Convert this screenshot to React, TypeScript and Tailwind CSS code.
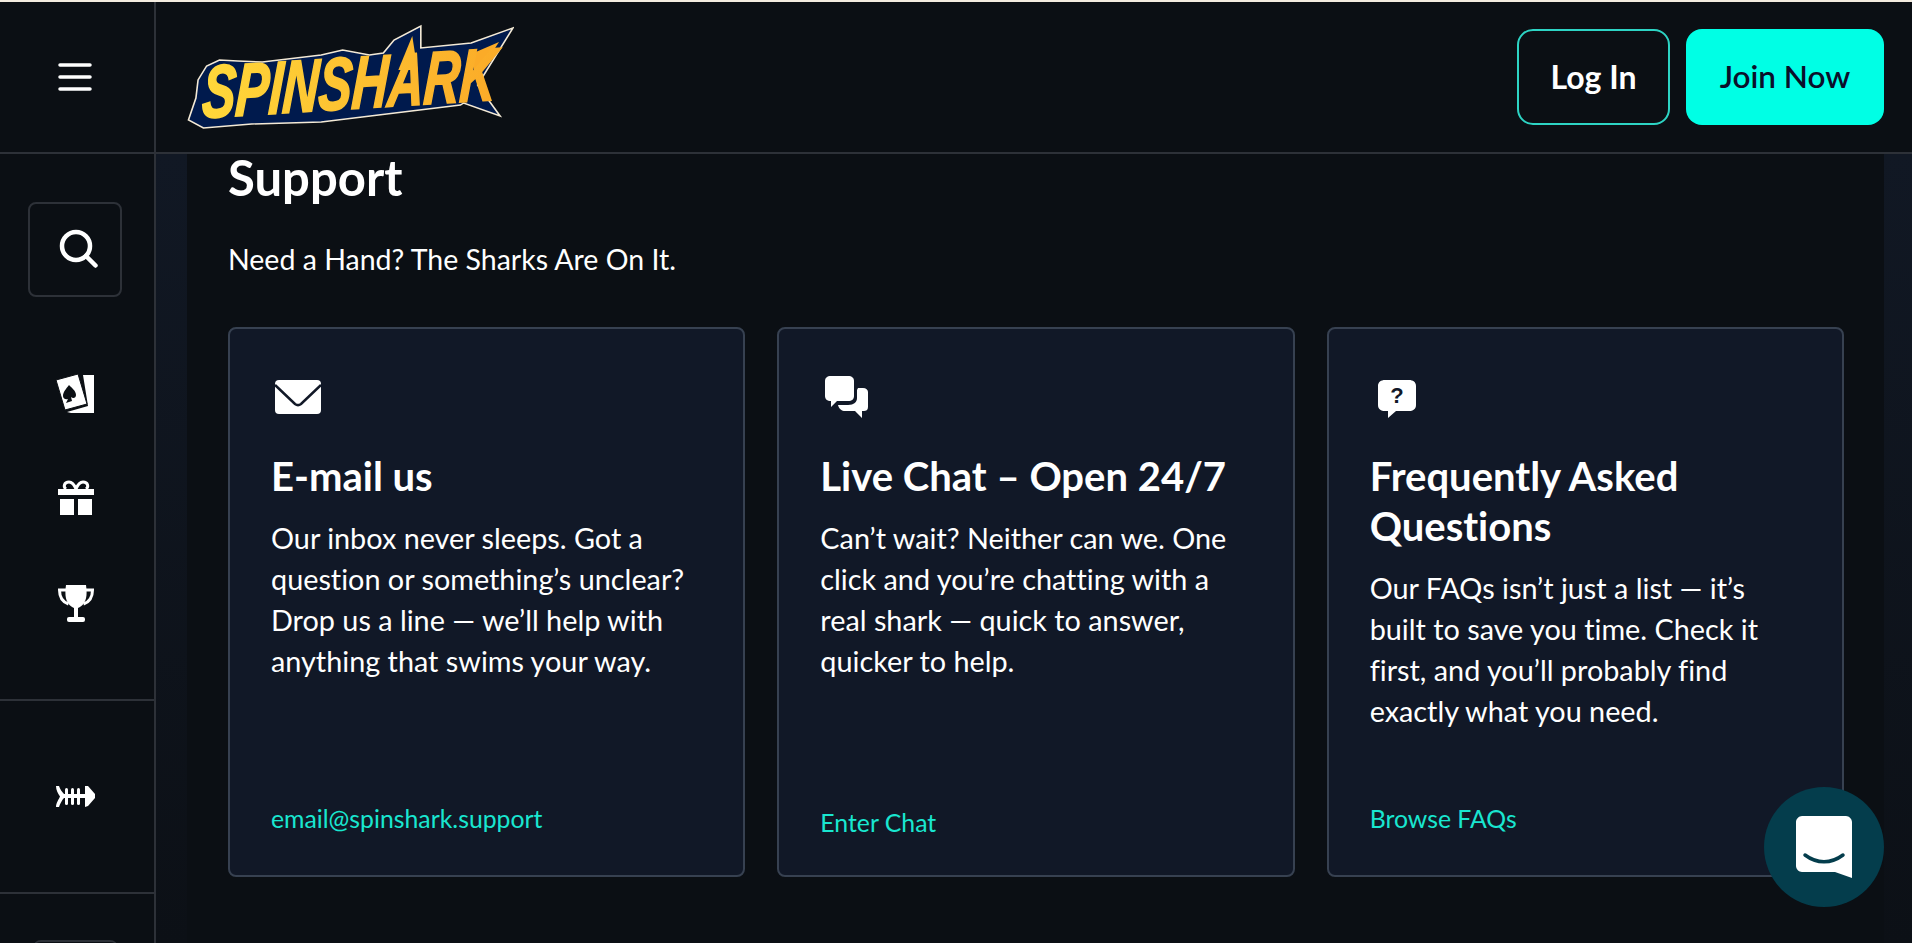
const font = { fontFamily: '"Lato", "Liberation Sans", sans-serif' };

function Logo() {
  return (
    <svg width="332" height="110" viewBox="170 22 310 110" preserveAspectRatio="none" className="shrink-0">
      <defs>
        <linearGradient id="gold" x1="0" y1="0" x2="1" y2="0">
          <stop offset="0" stopColor="#ffd83a" />
          <stop offset="1" stopColor="#fbab28" />
        </linearGradient>
      </defs>
      <polygon
        points="176,120 183,98 185,80 193,66 205,60 222,61 245,62 300,55 320,50 345,55 358,53 368,40 393,26 393,48 440,43 479,28 446,85 467,116 433,103 430,105 300,122 235,124 190,128"
        fill="#001a4d"
        stroke="#f4ead6"
        strokeWidth="1.500"
      />
      <polygon points="372,70 385,36 390,70" fill="#fdb92e" />
      <polygon points="440,54 466,42 444,78" fill="#fbab28" />
      <text
        transform="translate(188 118) rotate(-3.800) skewX(-7) scale(0.63 1)"
        fontFamily="Liberation Sans"
        fontWeight="700"
        fontStyle="italic"
        fontSize="74"
        fill="url(#gold)"
        stroke="url(#gold)"
        strokeWidth="2"
      >
        SPINSHARK
      </text>
    </svg>
  );
}

function CardsIcon() {
  return (
    <svg width="40" height="40" viewBox="0 0 40 40">
      <path d="M28 1h11v38H16l-4-1 21-6z" fill="#fff" />
      <path d="M1 6L23 0l9 30-22 6z" fill="#fff" stroke="#0b0f14" strokeWidth="1" />
      <path
        d="M14 11c3 3 7 6 7 10 0 3-3 4-5 2l1 4-6 2 2-4c-3 1-5-1-5-3 0-4 3-7 6-11z"
        fill="#0b0f14"
      />
    </svg>
  );
}

function GiftIcon() {
  return (
    <svg width="36" height="35" viewBox="0 0 36 35" fill="#fff">
      <rect x="0" y="9" width="36" height="6" />
      <rect x="2" y="19" width="14" height="16" />
      <rect x="20" y="19" width="14" height="16" />
      <path
        d="M18 9c-2-5-4-7-7-7-5 0-6 5-3 7M18 9c2-5 4-7 7-7 5 0 6 5 3 7"
        fill="none"
        stroke="#fff"
        strokeWidth="3"
      />
    </svg>
  );
}

function TrophyIcon() {
  return (
    <svg width="36" height="37" viewBox="0 0 36 37" fill="#fff">
      <path d="M8 0c2-.5 18-.5 20 0 1 7 1 14-2 18-2 3-4 4-6 5v10h-4V23c-2-1-4-2-6-5C7 14 7 7 8 0z" />
      <path d="M9 5H1.500c0 7 3 12 9 14M27 5h7.500c0 7-3 12-9 14" fill="none" stroke="#fff" strokeWidth="3" />
      <rect x="9" y="32" width="18" height="5" rx="2" />
    </svg>
  );
}

function FishIcon() {
  return (
    <svg width="40" height="21" viewBox="0 0 40 21" fill="#fff">
      <path d="M30 0l3 0 7 8v4l-7 8-3 1z" />
      <path d="M1 0l3 0c1 3 3 6 5 8h21v4H9c-2 2-4 6-5 9H1c0-4 3-8 4-10.500C3 8 1 4 1 0z" />
      <rect x="10" y="2" width="3" height="17" rx="1.500" />
      <rect x="16" y="2" width="3" height="17" rx="1.500" />
      <rect x="22" y="2" width="3" height="17" rx="1.500" />
    </svg>
  );
}

function MailIcon() {
  return (
    <svg width="46" height="34" viewBox="0 0 46 34">
      <rect width="46" height="34" rx="4" fill="#fff" />
      <path d="M0 5l20 19c2 1.500 4 1.500 6 0L46 5" fill="none" stroke="#111827" strokeWidth="2.500" />
    </svg>
  );
}

function ChatIcon() {
  return (
    <svg width="43" height="42" viewBox="0 0 43 42" fill="#fff">
      <path d="M6 0h17c4 0 6 2 6 5v15c0 3-2 5-6 5H12l-6 6v-6H6c-4 0-6-2-6-5V5c0-3 2-5 6-5z" />
      <path d="M33 12h5c3 0 5 2 5 4v15c0 3-2 4-4 4h-2v7l-7-7H20c-3 0-6-2-7-6h10c6 0 9-3 9-7V14z" />
    </svg>
  );
}

function QuestionIcon() {
  return (
    <svg width="38" height="38" viewBox="0 0 38 38">
      <path
        d="M7 0h24c4 0 7 2 7 6v19c0 4-3 6-7 6H18l-8 7v-7H7c-4 0-7-2-7-6V6c0-4 3-6 7-6z"
        fill="#fff"
      />
      <text
        x="19"
        y="23"
        textAnchor="middle"
        fontFamily="Liberation Sans"
        fontWeight="700"
        fontSize="22"
        fill="#111827"
      >
        ?
      </text>
    </svg>
  );
}

const cards = [
  {
    icon: <MailIcon />,
    iconBox: "pl-[4px]",
    title: "E-mail us",
    body: "Our inbox never sleeps. Got a question or something’s unclear? Drop us a line — we’ll help with anything that swims your way.",
    link: "email@spinshark.support",
    linkPad: "pb-[41px]",
  },
  {
    icon: <ChatIcon />,
    iconBox: "pl-[5px]",
    title: "Live Chat – Open 24/7",
    body: "Can’t wait? Neither can we. One click and you’re chatting with a real shark — quick to answer, quicker to help.",
    link: "Enter Chat",
    linkPad: "pb-[37px]",
  },
  {
    icon: <QuestionIcon />,
    iconBox: "pl-[8px] pt-[4px]",
    title: "Frequently Asked Questions",
    body: "Our FAQs isn’t just a list — it’s built to save you time. Check it first, and you’ll probably find exactly what you need.",
    link: "Browse FAQs",
    linkPad: "pb-[41px]",
  },
];

export default function App() {
  return (
    <div className="relative h-[943px] overflow-hidden bg-[#0b0f14] text-white [font-variant-ligatures:none]" style={font}>
      <div className="h-[2px] bg-[#f4ece0]" />
      <header className="flex h-[152px] items-center border-b-2 border-[#2d3138]">
        <div className="flex h-full w-[156px] shrink-0 items-center justify-center border-r-2 border-[#2d3138] pr-1">
          <svg width="34" height="30" viewBox="0 0 34 30" fill="none" stroke="#fff" strokeWidth="3.500" strokeLinecap="round">
            <path d="M2 3h30M2 15h30M2 27h30" />
          </svg>
        </div>
        <div className="ml-[26px]">
          <Logo />
        </div>
        <div className="ml-auto mr-[28px] flex gap-4">
          <button className="flex h-[96px] w-[153px] items-center justify-center rounded-2xl border-2 border-[#2dd4c4] text-[32px] font-bold">
            Log In
          </button>
          <button className="flex h-[96px] w-[198px] items-center justify-center rounded-2xl bg-[#00ffe5] text-[31.500px] font-semibold text-[#0b0f2a]">
            Join Now
          </button>
        </div>
      </header>

      <div className="flex h-[789px]">
        <aside className="flex w-[156px] shrink-0 flex-col border-r-2 border-[#2d3138]">
          <div className="flex h-[547px] shrink-0 flex-col items-center border-b-2 border-[#2d3138] pr-1 pt-[48px]">
            <div className="flex h-[95px] w-[94px] items-center justify-center rounded-lg border-2 border-[#2d3138]">
              <svg width="42" height="42" viewBox="0 0 42 42" className="ml-[10px]" fill="none" stroke="#fff" strokeWidth="4.500" strokeLinecap="round">
                <circle cx="17" cy="17" r="14" />
                <path d="M27 27l9.500 9.500" />
              </svg>
            </div>
            <div className="mt-[77px] flex flex-col items-center">
              <div className="-ml-px">
                <CardsIcon />
              </div>
              <div className="ml-[2px] mt-[66px]">
                <GiftIcon />
              </div>
              <div className="ml-[2px] mt-[70px]">
                <TrophyIcon />
              </div>
            </div>
          </div>
          <div className="flex h-[193px] shrink-0 items-center justify-center border-b-2 border-[#2d3138] pr-1">
            <FishIcon />
          </div>
          <div className="ml-[33px] mt-[46px] h-2 w-[85px] shrink-0 rounded-t-lg border-t-2 border-[#2d3138]" />
        </aside>

        <main className="min-w-0 flex-1 bg-gradient-to-b from-[#111824] to-[#0c1016] pl-[31px] pr-[28px]">
          <div className="h-full bg-[#0b0f14] pl-[41px] pr-[40px]">
            <h1 className="pt-[1px] text-[49px] font-bold leading-[44px]">Support</h1>
            <p className="mt-[42px] text-[28.500px] leading-[36px]">Need a Hand? The Sharks Are On It.</p>
            <div className="mt-[50px] grid h-[550px] grid-cols-3 gap-[32px]">
              {cards.map((card) => (
                <div key={card.title} className={`flex flex-col rounded-lg border-2 border-[#374151] bg-[#111827] pl-[41px] pr-[40px] pt-[49px] ${card.linkPad}`}>
                  <div className={`flex h-[38px] items-center ${card.iconBox}`}>{card.icon}</div>
                  <h2 className="mt-[35px] text-[40px] font-bold leading-[50px]">{card.title}</h2>
                  <p className="mt-[17px] text-[28.800px] leading-[41px]">{card.body}</p>
                  <a className="mt-auto text-[24.800px] leading-[30px] text-[#19e6d0]">{card.link}</a>
                </div>
              ))}
            </div>
          </div>
        </main>
      </div>

      <div className="absolute left-[1764px] top-[787px] flex h-[120px] w-[120px] items-center justify-center rounded-full bg-[#043d4c]">
        <svg width="56" height="62" viewBox="0 0 56 62">
          <path d="M6 0h44c3 0 6 3 6 6v56l-17-6H6c-3 0-6-3-6-6V6c0-3 3-6 6-6z" fill="#fff" />
          <path d="M9 39c12 9 26 9 38 0" fill="none" stroke="#043d4c" strokeWidth="3.500" strokeLinecap="round" />
        </svg>
      </div>
    </div>
  );
}
